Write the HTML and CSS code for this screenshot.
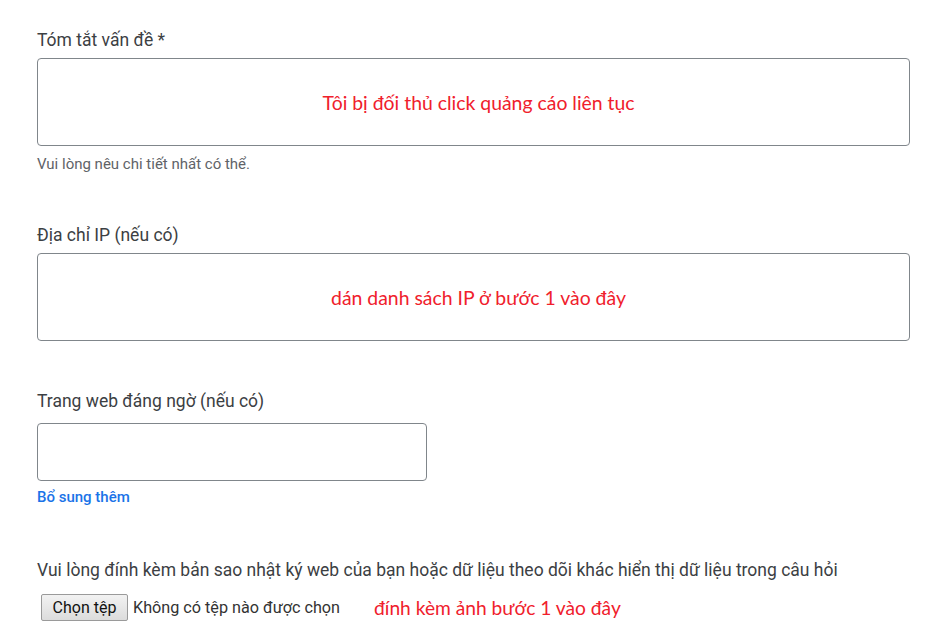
FILE: index.html
```html
<!DOCTYPE html>
<html lang="vi">
<head>
<meta charset="utf-8">
<link rel="stylesheet" href="styles.css">
</head>
<body>
<form class="form">
  <div class="field f1">
    <label class="label">Tóm tắt vấn đề *</label>
    <div class="box box-lg"><span class="note">Tôi bị đối thủ click quảng cáo liên tục</span></div>
    <div class="hint">Vui lòng nêu chi tiết nhất có thể.</div>
  </div>
  <div class="field f2">
    <label class="label">Địa chỉ IP (nếu có)</label>
    <div class="box box-lg"><span class="note">dán danh sách IP ở bước 1 vào đây</span></div>
  </div>
  <div class="field f3">
    <label class="label">Trang web đáng ngờ (nếu có)</label>
    <div class="box box-sm"></div>
    <a class="more">Bổ sung thêm</a>
  </div>
  <div class="field f4">
    <label class="label">Vui lòng đính kèm bản sao nhật ký web của bạn hoặc dữ liệu theo dõi khác hiển thị dữ liệu trong câu hỏi</label>
    <div class="file-row">
      <span class="file-btn">Chọn tệp</span>
      <span class="file-status">Không có tệp nào được chọn</span>
      <span class="note note-file">đính kèm ảnh bước 1 vào đây</span>
    </div>
  </div>
</form>
</body>
</html>
```

FILE: styles.css
```css
html, body {
  margin: 0;
  padding: 0;
  background: #fff;
}
body {
  font-family: Roboto, "Liberation Sans", sans-serif;
  color: #3c4043;
}
.form {
  padding: 29px 0 0 37px;
  width: 873px;
}
.field {
  display: flex;
  flex-direction: column;
}
.label {
  font-size: 17.5px;
  line-height: 22px;
  color: #3c4043;
}
.box {
  box-sizing: border-box;
  border: 1px solid #80868b;
  border-radius: 4px;
  margin-top: 7px;
  display: flex;
  align-items: center;
  justify-content: center;
}
.box-lg {
  width: 873px;
  height: 88px;
}
.box-sm {
  width: 390px;
  height: 58px;
  margin-top: 11px;
}
.note {
  font-family: Lato, "Noto Sans", sans-serif;
  color: #f0202c;
  font-size: 19.4px;
  padding-left: 10px;
}
.hint {
  font-size: 15px;
  line-height: 18px;
  color: #5f6368;
  margin-top: 9px;
}
.f2 { margin-top: 51px; }
.f3 { margin-top: 49px; }
.f4 { margin-top: 53px; }
.more {
  font-size: 15px;
  font-weight: 500;
  color: #1a73e8;
  margin-top: 7px;
  line-height: 18px;
}
.file-row {
  display: flex;
  align-items: center;
  margin-top: 13px;
  padding-left: 4px;
}
.file-btn {
  box-sizing: border-box;
  width: 87px;
  height: 27px;
  display: flex;
  align-items: center;
  justify-content: center;
  font-size: 16px;
  color: #111;
  border: 1px solid #9a9a9a;
  border-radius: 2px;
  background: linear-gradient(#f2f2f2, #dcdcdc);
}
.file-status {
  font-size: 16.2px;
  color: #333;
  margin-left: 5px;
}
.note-file {
  padding-left: 0;
  margin-left: 34px;
  font-size: 19.2px;
}
```
